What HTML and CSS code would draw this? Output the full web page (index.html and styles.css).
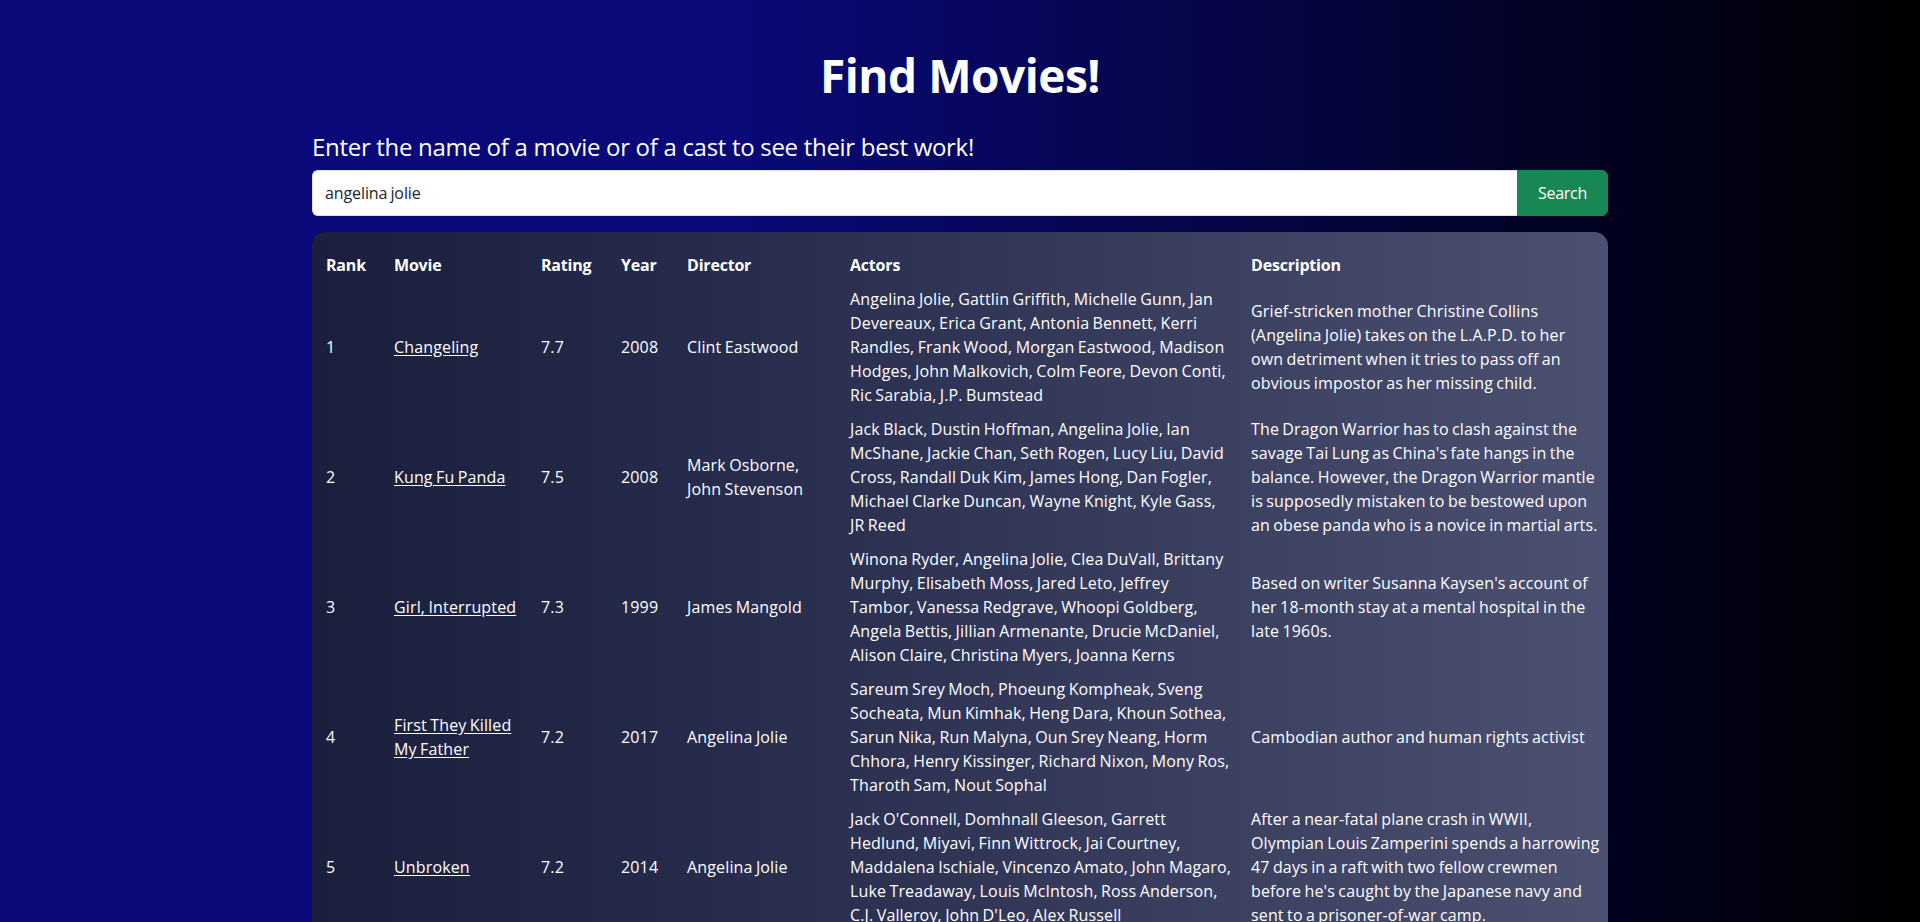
FILE: index.html
```html
<!DOCTYPE html>
<html lang="en">
<head>
<meta charset="utf-8">
<title>Find Movies!</title>
<link rel="stylesheet" href="styles.css">
</head>
<body>
<main class="page">
  <h1 class="title">Find Movies!</h1>
  <section class="search-area">
    <h2 class="prompt">Enter the name of a movie or of a cast to see their best work!</h2>
    <form class="search-form">
      <input class="search-input" type="text" value="angelina jolie">
      <button class="search-btn" type="button">Search</button>
    </form>
  </section>
  <div class="results-card">
    <table class="results">
      <colgroup>
        <col class="col-rank">
        <col class="col-movie">
        <col class="col-rating">
        <col class="col-year">
        <col class="col-director">
        <col class="col-actors">
        <col class="col-desc">
      </colgroup>
      <thead>
        <tr>
          <th>Rank</th>
          <th>Movie</th>
          <th>Rating</th>
          <th>Year</th>
          <th>Director</th>
          <th class="cell-actors">Actors</th>
          <th class="cell-desc">Description</th>
        </tr>
      </thead>
      <tbody>
        <tr>
          <td>1</td>
          <td><a href="#">Changeling</a></td>
          <td>7.7</td>
          <td>2008</td>
          <td>Clint Eastwood</td>
          <td class="cell-actors">Angelina Jolie, Gattlin Griffith, Michelle Gunn, Jan Devereaux, Erica Grant, Antonia Bennett, Kerri Randles, Frank Wood, Morgan Eastwood, Madison Hodges, John Malkovich, Colm Feore, Devon Conti, Ric Sarabia, J.P. Bumstead</td>
          <td class="cell-desc">Grief-stricken mother Christine Collins (Angelina Jolie) takes on the L.A.P.D. to her own detriment when it tries to pass off an obvious impostor as her missing child.</td>
        </tr>
        <tr>
          <td>2</td>
          <td><a href="#">Kung Fu Panda</a></td>
          <td>7.5</td>
          <td>2008</td>
          <td>Mark Osborne, John Stevenson</td>
          <td class="cell-actors">Jack Black, Dustin Hoffman, Angelina Jolie, Ian McShane, Jackie Chan, Seth Rogen, Lucy Liu, David Cross, Randall Duk Kim, James Hong, Dan Fogler, Michael Clarke Duncan, Wayne Knight, Kyle Gass, JR Reed</td>
          <td class="cell-desc">The Dragon Warrior has to clash against the savage Tai Lung as China's fate hangs in the balance. However, the Dragon Warrior mantle is supposedly mistaken to be bestowed upon an obese panda who is a novice in martial arts.</td>
        </tr>
        <tr>
          <td>3</td>
          <td><a href="#">Girl, Interrupted</a></td>
          <td>7.3</td>
          <td>1999</td>
          <td>James Mangold</td>
          <td class="cell-actors">Winona Ryder, Angelina Jolie, Clea DuVall, Brittany Murphy, Elisabeth Moss, Jared Leto, Jeffrey Tambor, Vanessa Redgrave, Whoopi Goldberg, Angela Bettis, Jillian Armenante, Drucie McDaniel, Alison Claire, Christina Myers, Joanna Kerns</td>
          <td class="cell-desc">Based on writer Susanna Kaysen's account of her 18-month stay at a mental hospital in the late 1960s.</td>
        </tr>
        <tr>
          <td>4</td>
          <td><a href="#">First They Killed My Father</a></td>
          <td>7.2</td>
          <td>2017</td>
          <td>Angelina Jolie</td>
          <td class="cell-actors">Sareum Srey Moch, Phoeung Kompheak, Sveng Socheata, Mun Kimhak, Heng Dara, Khoun Sothea, Sarun Nika, Run Malyna, Oun Srey Neang, Horm Chhora, Henry Kissinger, Richard Nixon, Mony Ros, Tharoth Sam, Nout Sophal</td>
          <td class="cell-desc">Cambodian author and human rights activist</td>
        </tr>
        <tr>
          <td>5</td>
          <td><a href="#">Unbroken</a></td>
          <td>7.2</td>
          <td>2014</td>
          <td>Angelina Jolie</td>
          <td class="cell-actors">Jack O'Connell, Domhnall Gleeson, Garrett Hedlund, Miyavi, Finn Wittrock, Jai Courtney, Maddalena Ischiale, Vincenzo Amato, John Magaro, Luke Treadaway, Louis McIntosh, Ross Anderson, C.J. Valleroy, John D'Leo, Alex Russell</td>
          <td class="cell-desc">After a near-fatal plane crash in WWII, Olympian Louis Zamperini spends a harrowing 47 days in a raft with two fellow crewmen before he's caught by the Japanese navy and sent to a prisoner-of-war camp.</td>
        </tr>
      </tbody>
    </table>
  </div>
</main>
</body>
</html>
```
FILE: styles.css
```css
* {
  box-sizing: border-box;
}

html,
body {
  margin: 0;
  padding: 0;
}

body {
  background: linear-gradient(90deg, #090979 0%, #090979 38%, #000000 100%);
  color: #ffffff;
  font-family: "Open Sans", "Noto Sans", sans-serif;
  font-size: 16px;
  line-height: 24px;
  letter-spacing: 0.15px;
  word-spacing: -1px;
  min-height: 922px;
}

.page {
  width: 1296px;
  margin: 0 auto;
  padding-top: 48px;
}

.title {
  margin: 0;
  text-align: center;
  font-size: 46px;
  line-height: 1.2;
  font-weight: 700;
  letter-spacing: -0.5px;
  word-spacing: 0;
}

.search-area {
  margin-top: 30px;
}

.prompt {
  margin: 0 0 8px;
  font-size: 24px;
  line-height: 1.2;
  font-weight: 400;
  letter-spacing: -0.3px;
  word-spacing: 0;
}

.search-form {
  display: flex;
  height: 46px;
  margin: 0;
}

.search-input {
  flex: 1;
  min-width: 0;
  height: 46px;
  margin: 0;
  padding: 0 12px;
  border: 1px solid #dee2e6;
  border-right: 0;
  border-radius: 6px 0 0 6px;
  background: #ffffff;
  color: #212529;
  font-family: inherit;
  font-size: 16px;
  letter-spacing: -0.1px;
  word-spacing: -1px;
  outline: none;
}

.search-btn {
  width: 91px;
  height: 46px;
  margin: 0;
  padding: 0;
  border: 1px solid #198754;
  border-radius: 0 6px 6px 0;
  background: #198754;
  color: #ffffff;
  font-family: inherit;
  font-size: 16px;
  letter-spacing: -0.3px;
  cursor: pointer;
}

.results-card {
  margin-top: 16px;
  padding: 16px 6px;
  border-radius: 14px;
  background: linear-gradient(90deg, #1b1f3d 0%, #2b2f50 40%, #4c5071 100%);
}

.results {
  width: 100%;
  table-layout: fixed;
  border-collapse: collapse;
}

.col-rank { width: 68px; }
.col-movie { width: 147px; }
.col-rating { width: 80px; }
.col-year { width: 66px; }
.col-director { width: 163px; }
.col-actors { width: 401px; }
.col-desc { width: 359px; }

.results th,
.results td {
  padding: 5px 8px;
  text-align: left;
}

.results .cell-actors {
  padding-right: 10.5px;
}

.results .cell-desc {
  padding-right: 1.75px;
}

.results th {
  font-weight: 700;
  vertical-align: bottom;
  letter-spacing: -0.2px;
}

.results td {
  vertical-align: middle;
}

.results a {
  color: #ffffff;
  text-decoration: underline;
  text-underline-offset: 2px;
}
```
